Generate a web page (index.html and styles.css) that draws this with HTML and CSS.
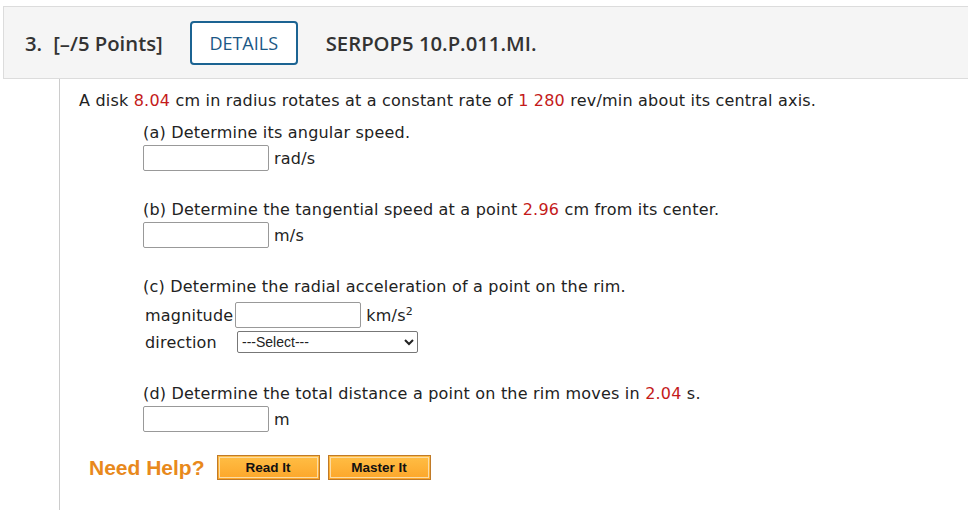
FILE: index.html
```html
<!DOCTYPE html>
<html lang="en">
<head>
  <meta charset="UTF-8" />
  <title>Question 3</title>
  <link rel="stylesheet" href="styles.css">
</head>
<body>
  <div class="question">
    <div class="q-header">
      <span class="q-num">3.</span>
      <span class="q-points">[&ndash;/5 Points]</span>
      <button class="details-btn" type="button">DETAILS</button>
      <span class="q-code">SERPOP5 10.P.011.MI.</span>
    </div>

    <div class="q-body">
      <p class="stem">A disk <span class="num">8.04</span> cm in radius rotates at a constant rate of <span class="num">1 280</span> rev/min about its central axis.</p>

      <div class="part">
        <div class="part-text">(a) Determine its angular speed.</div>
        <div class="answer"><input type="text" class="ans" /><span class="unit">rad/s</span></div>
      </div>

      <div class="part">
        <div class="part-text">(b) Determine the tangential speed at a point <span class="num">2.96</span> cm from its center.</div>
        <div class="answer"><input type="text" class="ans" /><span class="unit">m/s</span></div>
      </div>

      <div class="part">
        <div class="part-text">(c) Determine the radial acceleration of a point on the rim.</div>
        <div class="answer labeled">
          <span class="field-label">magnitude</span><input type="text" class="ans" /><span class="unit">km/s<sup>2</sup></span>
        </div>
        <div class="answer">
          <span class="field-label dir">direction</span>
          <select class="dir-select">
            <option>---Select---</option>
            <option>toward the center</option>
            <option>away from the center</option>
          </select>
        </div>
      </div>

      <div class="part">
        <div class="part-text">(d) Determine the total distance a point on the rim moves in <span class="num">2.04</span> s.</div>
        <div class="answer"><input type="text" class="ans" /><span class="unit">m</span></div>
      </div>

      <div class="help">
        <span class="need-help">Need Help?</span>
        <button class="help-btn" type="button">Read It</button>
        <button class="help-btn" type="button">Master It</button>
      </div>
    </div>
  </div>
</body>
</html>
```

FILE: styles.css
```css
body {
  margin: 0;
  background: #fff;
  overflow: hidden;
}
.question {
  padding: 6px 0 0 3px;
}
.q-header {
  display: flex;
  align-items: center;
  height: 71px;
  margin-right: -20px;
  padding-left: 21px;
  background: #f5f5f5;
  border: 1px solid #dcdcdc;
  font-family: "Open Sans", sans-serif;
  font-size: 20.3px;
  color: #333;
}
.q-num {
  font-weight: 600;
  margin-right: 11px;
}
.q-points {
  font-weight: 600;
}
.details-btn {
  margin-left: 27px;
  width: 108px;
  height: 44px;
  border: 2px solid #1b6392;
  border-radius: 4px;
  background: #fff;
  font-family: "Open Sans", sans-serif;
  font-size: 18px;
  font-weight: 500;
  color: #1b5886;
  padding: 0;
}
.q-code {
  margin-left: 28px;
  font-weight: 600;
}
.q-body {
  margin-left: 56px;
  border-left: 1px solid #ccc;
  padding: 12px 0 30px 19px;
  font-family: "DejaVu Sans", Verdana, sans-serif;
  font-size: 16px;
  letter-spacing: 0.2px;
  color: #222;
}
.stem {
  margin: 0 0 12px;
  line-height: 20px;
}
.num {
  color: #c41a1a;
}
.part {
  margin-left: 64px;
  margin-bottom: 29px;
}
.part-text {
  line-height: 20px;
  margin-bottom: 2px;
}
.answer {
  display: flex;
  align-items: center;
  height: 26px;
  margin-bottom: 3px;
}
.answer.labeled {
  margin-top: 5px;
  margin-bottom: 1px;
}
.ans {
  box-sizing: border-box;
  width: 126px;
  height: 26px;
  margin: 0 5px 0 0;
  border: 1px solid #999;
  border-radius: 2px;
  background: #fff;
}
.unit sup {
  font-size: 11px;
  vertical-align: 6px;
}
.field-label {
  margin: 0 2px 0 2px;
}
.field-label.dir {
  width: 90px;
}
.dir-select {
  box-sizing: border-box;
  width: 181px;
  height: 22px;
  border: 1px solid #777;
  border-radius: 2px;
  background: #fff;
  font-family: "Liberation Sans", Arial, sans-serif;
  font-size: 14px;
  letter-spacing: 0;
  color: #222;
}
.help {
  display: flex;
  align-items: center;
  margin-left: 10px;
  margin-top: -6px;
}
.need-help {
  font-family: "Liberation Sans", Arial, sans-serif;
  font-weight: 700;
  font-size: 21px;
  letter-spacing: 0;
  color: #e8891c;
  margin-right: 12px;
}
.help-btn {
  box-sizing: border-box;
  width: 103px;
  height: 25px;
  margin-right: 8px;
  padding: 0;
  border: 1px solid #c07a28;
  outline: 1px solid #fbdca6;
  outline-offset: -3px;
  background: linear-gradient(#ffbe45, #fca62a);
  font-family: "Liberation Sans", Arial, sans-serif;
  font-weight: 700;
  font-size: 13.5px;
  letter-spacing: 0;
  color: #111;
}
```
